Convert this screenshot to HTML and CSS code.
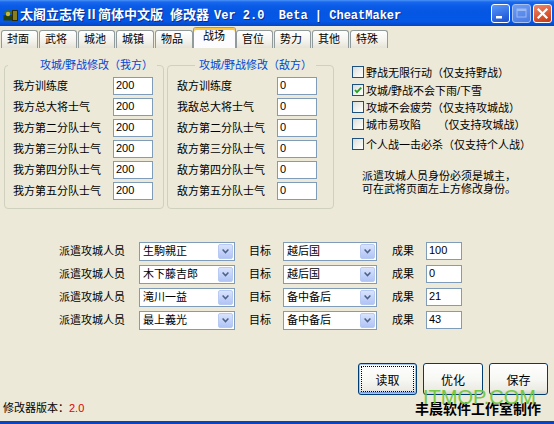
FILE: index.html
```html
<!DOCTYPE html>
<html lang="zh-CN">
<head>
<meta charset="utf-8">
<title>太阁立志传Ⅱ简体中文版 修改器</title>
<link rel="stylesheet" href="styles.css">
</head>
<body>
<div class="window">
  <div class="titlebar">
    <svg class="app-icon" viewBox="0 0 15 15" width="15" height="15">
      <rect x="0.5" y="9" width="9" height="5.5" fill="#23400C"/>
      <path d="M1 7 Q5 1 9 7 Z" fill="#3E6E16"/>
      <circle cx="5" cy="8" r="2.2" fill="#C9B840"/>
      <rect x="9.5" y="4.5" width="5" height="10" fill="#E6D22E" stroke="#2A2A08" stroke-width="1"/>
      <line x1="11" y1="5" x2="11" y2="14" stroke="#2A2A08" stroke-width="1"/>
      <line x1="13" y1="5" x2="13" y2="14" stroke="#2A2A08" stroke-width="1"/>
    </svg>
    <div class="title"><span class="t-cjk">太阁立志传Ⅱ简体中文版</span><span class="t-cjk t-gap">修改器</span><span class="t-mono">Ver 2.0  Beta | CheatMaker</span></div>
    <div class="tb-buttons">
      <div class="tb-btn tb-min"><svg viewBox="0 0 17 17" width="17" height="17"><rect x="4" y="11" width="6" height="2.5" fill="#fff"/></svg></div>
      <div class="tb-btn tb-max"><svg viewBox="0 0 17 17" width="17" height="17"><rect x="4" y="4" width="9" height="8" fill="none" stroke="#9DB9F2" stroke-width="1"/><rect x="4" y="4" width="9" height="2" fill="#9DB9F2"/></svg></div>
      <div class="tb-btn tb-close"><svg viewBox="0 0 17 17" width="17" height="17"><path d="M4.5 4.5 L12.5 12.5 M12.5 4.5 L4.5 12.5" stroke="#fff" stroke-width="2.2" stroke-linecap="square"/></svg></div>
    </div>
  </div>

  <div class="tabs">
    <div class="tab">封面</div>
    <div class="tab w38">武将</div>
    <div class="tab">城池</div>
    <div class="tab w38">城镇</div>
    <div class="tab tight">物品</div>
    <div class="tab active">战场</div>
    <div class="tab">官位</div>
    <div class="tab">势力</div>
    <div class="tab">其他</div>
    <div class="tab w38">特殊</div>
  </div>

  <div class="page">
    <div class="top">
      <section class="group mine">
        <div class="group-title"><span class="gt-text">攻城/野战修改（我方）</span></div>
        <div class="row"><span class="lbl">我方训练度</span><span class="num">200</span></div>
        <div class="row"><span class="lbl">我方总大将士气</span><span class="num">200</span></div>
        <div class="row"><span class="lbl">我方第二分队士气</span><span class="num">200</span></div>
        <div class="row"><span class="lbl">我方第三分队士气</span><span class="num">200</span></div>
        <div class="row"><span class="lbl">我方第四分队士气</span><span class="num">200</span></div>
        <div class="row"><span class="lbl">我方第五分队士气</span><span class="num">200</span></div>
      </section>
      <section class="group enemy">
        <div class="group-title"><span class="gt-text">攻城/野战修改（敌方）</span></div>
        <div class="row"><span class="lbl">敌方训练度</span><span class="num">0</span></div>
        <div class="row"><span class="lbl">我敌总大将士气</span><span class="num">0</span></div>
        <div class="row"><span class="lbl">敌方第二分队士气</span><span class="num">0</span></div>
        <div class="row"><span class="lbl">敌方第三分队士气</span><span class="num">0</span></div>
        <div class="row"><span class="lbl">敌方第四分队士气</span><span class="num">0</span></div>
        <div class="row"><span class="lbl">敌方第五分队士气</span><span class="num">0</span></div>
      </section>
      <div class="options">
        <div class="opt first"><span class="cb"></span><span>野战无限行动（仅支持野战）</span></div>
        <div class="opt"><span class="cb"><svg viewBox="0 0 10 10" width="10" height="10"><path d="M2 5 L4 7.2 L8.2 2.6" fill="none" stroke="#21A121" stroke-width="1.8"/></svg></span><span>攻城/野战不会下雨/下雪</span></div>
        <div class="opt"><span class="cb"></span><span>攻城不会疲劳（仅支持攻城战）</span></div>
        <div class="opt"><span class="cb"></span><span>城市易攻陷　　（仅支持攻城战）</span></div>
        <div class="opt last"><span class="cb"></span><span>个人战一击必杀（仅支持个人战）</span></div>
        <div class="note">派遣攻城人员身份必须是城主，<br>可在武将页面左上方修改身份。</div>
      </div>
    </div>

    <div class="assign">
      <div class="arow">
        <span class="albl">派遣攻城人员</span>
        <div class="combo c1"><span class="combo-text">生駒親正</span><span class="combo-btn"><svg viewBox="0 0 7 5" width="7" height="5"><path d="M0.6 0.6 L3.5 3.6 L6.4 0.6" fill="none" stroke="#4D6185" stroke-width="1.5"/></svg></span></div>
        <span class="albl short gap1">目标</span>
        <div class="combo c2"><span class="combo-text">越后国</span><span class="combo-btn"><svg viewBox="0 0 7 5" width="7" height="5"><path d="M0.6 0.6 L3.5 3.6 L6.4 0.6" fill="none" stroke="#4D6185" stroke-width="1.5"/></svg></span></div>
        <span class="albl short gap2">成果</span>
        <span class="num res">100</span>
      </div>
      <div class="arow">
        <span class="albl">派遣攻城人员</span>
        <div class="combo c1"><span class="combo-text">木下藤吉郎</span><span class="combo-btn"><svg viewBox="0 0 7 5" width="7" height="5"><path d="M0.6 0.6 L3.5 3.6 L6.4 0.6" fill="none" stroke="#4D6185" stroke-width="1.5"/></svg></span></div>
        <span class="albl short gap1">目标</span>
        <div class="combo c2"><span class="combo-text">越后国</span><span class="combo-btn"><svg viewBox="0 0 7 5" width="7" height="5"><path d="M0.6 0.6 L3.5 3.6 L6.4 0.6" fill="none" stroke="#4D6185" stroke-width="1.5"/></svg></span></div>
        <span class="albl short gap2">成果</span>
        <span class="num res">0</span>
      </div>
      <div class="arow">
        <span class="albl">派遣攻城人员</span>
        <div class="combo c1"><span class="combo-text">滝川一益</span><span class="combo-btn"><svg viewBox="0 0 7 5" width="7" height="5"><path d="M0.6 0.6 L3.5 3.6 L6.4 0.6" fill="none" stroke="#4D6185" stroke-width="1.5"/></svg></span></div>
        <span class="albl short gap1">目标</span>
        <div class="combo c2"><span class="combo-text">备中备后</span><span class="combo-btn"><svg viewBox="0 0 7 5" width="7" height="5"><path d="M0.6 0.6 L3.5 3.6 L6.4 0.6" fill="none" stroke="#4D6185" stroke-width="1.5"/></svg></span></div>
        <span class="albl short gap2">成果</span>
        <span class="num res">21</span>
      </div>
      <div class="arow">
        <span class="albl">派遣攻城人员</span>
        <div class="combo c1"><span class="combo-text">最上義光</span><span class="combo-btn"><svg viewBox="0 0 7 5" width="7" height="5"><path d="M0.6 0.6 L3.5 3.6 L6.4 0.6" fill="none" stroke="#4D6185" stroke-width="1.5"/></svg></span></div>
        <span class="albl short gap1">目标</span>
        <div class="combo c2"><span class="combo-text">备中备后</span><span class="combo-btn"><svg viewBox="0 0 7 5" width="7" height="5"><path d="M0.6 0.6 L3.5 3.6 L6.4 0.6" fill="none" stroke="#4D6185" stroke-width="1.5"/></svg></span></div>
        <span class="albl short gap2">成果</span>
        <span class="num res">43</span>
      </div>
    </div>

    <div class="actions">
      <div class="btn default w59">读取</div>
      <div class="btn">优化</div>
      <div class="btn w59">保存</div>
    </div>
  </div>

  <div class="footer">
    <span>修改器版本：<span class="ver">2.0</span></span>
    <span class="credit">丰晨软件工作室制作</span>
  </div>
  <div class="frame-bottom"></div>
  <div class="watermark">ITMOP.COM</div>
</div>
</body>
</html>
```

FILE: styles.css
```css
* { box-sizing: border-box; }
html, body { margin: 0; padding: 0; }
body {
  width: 554px;
  height: 424px;
  overflow: hidden;
  background: #ECE9D8;
  font-family: "Liberation Sans", "Noto Sans CJK SC", sans-serif;
  font-size: 11px;
  color: #000;
}
.window {
  position: relative;
  width: 554px;
  height: 424px;
  display: flex;
  flex-direction: column;
  background: #ECE9D8;
}

/* title bar */
.titlebar {
  flex: none;
  height: 26px;
  display: flex;
  align-items: center;
  padding: 0 2px 0 3px;
  background: linear-gradient(180deg, #4A93F6 0px, #1A68EE 2px, #0A5BE6 6px, #0456E3 50%, #0558E6 82%, #0645C4 100%);
}
.app-icon { flex: none; margin-right: 2px; }
.title {
  flex: 1;
  display: flex;
  align-items: baseline;
  color: #fff;
  font-weight: bold;
  white-space: pre;
  text-shadow: 1px 1px 0 #0B2B8F;
}
.t-cjk { font-family: "Noto Sans CJK SC", sans-serif; font-size: 13px; }
.t-gap { margin-left: 7px; }
.t-mono { font-family: "Liberation Mono", monospace; font-size: 12px; margin-left: 5px; }
.tb-buttons { display: flex; gap: 2px; }
.tb-btn {
  width: 19px;
  height: 19px;
  border: 1px solid #fff;
  border-radius: 3px;
  display: flex;
  align-items: center;
  justify-content: center;
}
.tb-min { background: linear-gradient(160deg, #5A9AFB, #2A63DE 70%, #1E50CC); }
.tb-max { background: linear-gradient(160deg, #6E9DF3, #4A7BE4); border-color: #A8C2F4; }
.tb-close { background: linear-gradient(160deg, #EE8A6C, #DB5530 60%, #C23A14); }

/* tabs */
.tabs {
  flex: none;
  height: 21px;
  margin-top: 1px;
  padding-left: 1px;
  display: flex;
  align-items: flex-end;
}
.tab {
  width: 37px;
  height: 18px;
  margin-right: 1px;
  padding-left: 5px;
  border: 1px solid #919B9C;
  border-bottom: none;
  border-radius: 3px 3px 0 0;
  background: linear-gradient(#FFFFFF, #F3F2EC 60%, #E6E3D6);
  line-height: 16px;
  white-space: nowrap;
}
.tab.w38 { width: 38px; }
.tab.tight { margin-right: 0; width: 38px; }
.tab.active {
  width: 43px;
  height: 21px;
  margin-right: 0;
  padding-left: 9px;
  background: #FCFCFE;
  border-top-color: #E68B2C;
  box-shadow: inset 0 2px 0 #FFC83C;
  line-height: 16px;
}

/* page */
.page { flex: none; padding: 9px 0 0 4px; }
.top { display: flex; align-items: flex-start; }
.group {
  margin-top: 8px;
  border: 1px solid #D0D0BF;
  border-radius: 4px;
  padding-bottom: 5px;
}
.group-title {
  display: flex;
  height: 16px;
  margin-top: -9px;
  margin-bottom: 4px;
  color: #0046D5;
  line-height: 16px;
  white-space: nowrap;
}
.gt-text { background: #ECE9D8; }
.mine { width: 160px; padding-left: 8px; padding-right: 10px; }
.mine .gt-text { margin-left: -5px; padding-left: 32px; padding-right: 4px; }
.enemy { width: 167px; margin-left: 3px; padding-left: 9px; padding-right: 16px; }
.enemy .gt-text { margin-left: 18px; padding-left: 4px; padding-right: 4px; }
.row { display: flex; height: 21px; }
.lbl { flex: 1; line-height: 18px; white-space: nowrap; }
.num {
  display: block;
  width: 40px;
  height: 18px;
  border: 1px solid #7F9DB9;
  background: #fff;
  padding-left: 2px;
  line-height: 14px;
}

/* options */
.options { margin-left: 18px; margin-top: 6px; }
.opt { display: flex; align-items: center; height: 17px; white-space: nowrap; }
.opt.first { height: 18px; }
.opt.last { margin-top: 3px; }
.cb {
  flex: none;
  width: 12px;
  height: 12px;
  margin-right: 2px;
  border: 1px solid #1C5180;
  background: linear-gradient(135deg, #DCDCD7, #F6F6F3 70%, #FFFFFF);
  display: flex;
  align-items: center;
  justify-content: center;
}
.note { margin-top: 18px; margin-left: 10px; line-height: 13px; white-space: nowrap; }

/* assign rows */
.assign { margin-top: 33px; margin-left: 55px; }
.arow { display: flex; align-items: flex-start; height: 23px; }
.albl { width: 80px; line-height: 19px; white-space: nowrap; }
.albl.short { width: 34px; }
.gap1 { margin-left: 14px; }
.gap2 { margin-left: 15px; }
.combo {
  display: flex;
  height: 19px;
  border: 1px solid #7F9DB9;
  background: #fff;
  padding: 1px;
}
.c1 { width: 96px; }
.c2 { width: 94px; }
.combo-text { flex: 1; padding-left: 2px; line-height: 15px; white-space: nowrap; overflow: hidden; }
.combo-btn {
  flex: none;
  width: 15px;
  height: 15px;
  border: 1px solid #B9CAF2;
  border-radius: 2px;
  background: linear-gradient(#D9E3FC, #C3D3FA 50%, #B0C4F4);
  display: flex;
  align-items: center;
  justify-content: center;
}
.num.res { width: 36px; }

/* buttons */
.actions {
  display: flex;
  justify-content: flex-end;
  gap: 6px;
  margin-top: 29px;
  padding-right: 6px;
}
.btn {
  width: 60px;
  height: 32px;
  border: 1px solid #003C74;
  border-radius: 3px;
  background: linear-gradient(#FFFFFF, #F6F6F2 55%, #ECEBE4 85%, #D8D3C6);
  font-size: 12px;
  display: flex;
  align-items: center;
  justify-content: center;
}
.btn.w59 { width: 59px; }
.btn.default {
  box-shadow: inset 0 0 0 1px #A8C4F0, inset 0 -1px 0 1px #7D9FE0;
  outline: 1px dotted #000;
  outline-offset: -4px;
}

/* footer */
.footer {
  flex: none;
  height: 16px;
  margin-top: 5px;
  padding: 0 13px 0 3px;
  display: flex;
  justify-content: space-between;
  align-items: center;
  line-height: 16px;
  white-space: nowrap;
}
.ver { color: #E00000; }
.credit { font-family: "Noto Sans CJK SC", sans-serif; font-weight: bold; font-size: 14px; line-height: 14px; }
.frame-bottom { margin-top: auto; height: 3px; background: #0A43C2; flex: none; }

.watermark {
  position: absolute;
  left: 423px;
  top: 390px;
  font-family: "Liberation Sans", sans-serif;
  font-size: 20px;
  line-height: 15px;
  color: #66C634;
  opacity: 0.9;
  white-space: nowrap;
}
```
